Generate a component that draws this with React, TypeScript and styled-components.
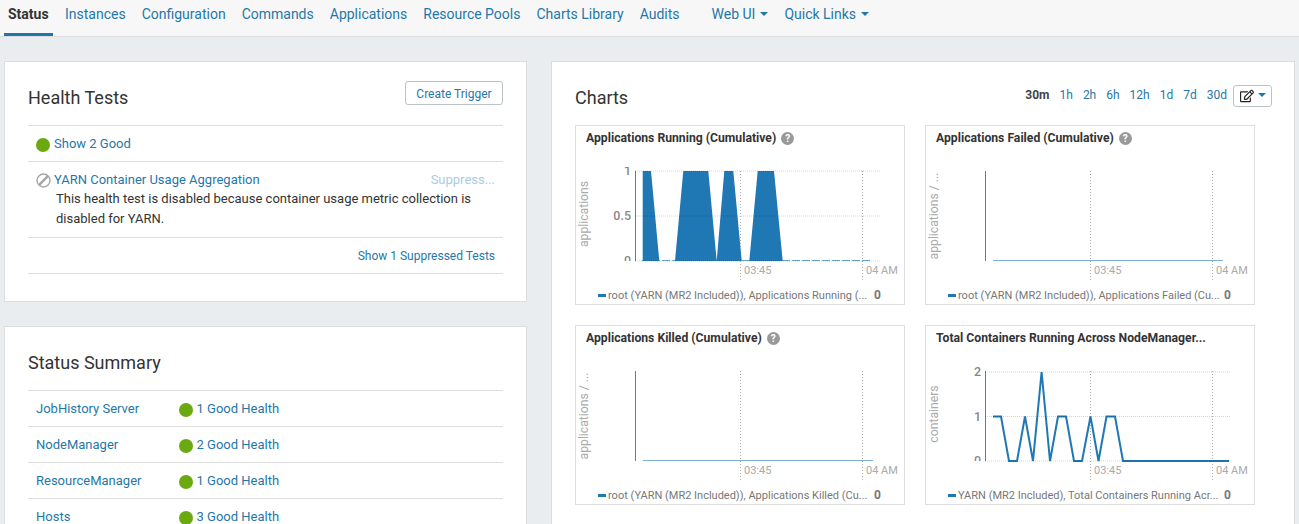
import React from "react";
import styled, { createGlobalStyle } from "styled-components";
import { FaRegEdit } from "react-icons/fa";

const GlobalStyle = createGlobalStyle`
  html, body {
    margin: 0;
    padding: 0;
    height: 524px;
    overflow: hidden;
    background: #e9edf0;
    font-family: Roboto, "Liberation Sans", sans-serif;
    font-size: 13px;
    color: #333;
  }
  * { box-sizing: border-box; }
`;

const LINK = "#1f77a8";

const Nav = styled.nav`
  height: 37px;
  background: #f7f7f7;
  border-bottom: 1px solid #dcdcdc;
  display: flex;
  padding-left: 4px;
`;
const Tab = styled.a<{ $active?: boolean; $gap?: number }>`
  height: 36px;
  min-width: ${(p) => (p.$active ? "49px" : "0")};
  padding: 5px 4px 0;
  margin-left: ${(p) => p.$gap ?? 0}px;
  margin-right: 8px;
  font-size: 14px;
  line-height: 18px;
  color: ${(p) => (p.$active ? "#333" : LINK)};
  font-weight: ${(p) => (p.$active ? 700 : 400)};
  border-bottom: 3px solid ${(p) => (p.$active ? LINK : "transparent")};
  display: flex;
  align-items: flex-start;
`;
const Caret = styled.span`
  display: inline-block;
  width: 0;
  height: 0;
  margin-left: 5px;
  margin-top: 7px;
  border-left: 4px solid transparent;
  border-right: 4px solid transparent;
  border-top: 4px solid ${LINK};
`;
const EditCaret = styled(Caret)`
  margin-top: 0;
  margin-bottom: 2px;
  margin-left: 4px;
`;

const Main = styled.main`
  display: grid;
  grid-template-columns: 523px 744px;
  gap: 24px;
  padding: 24px 4px 0;
  align-items: start;
`;
const Column = styled.div`
  display: flex;
  flex-direction: column;
  gap: 24px;
`;
const Panel = styled.section`
  background: #fff;
  border: 1px solid #dddddd;
  padding: 19px 23px 27px;
`;
const PanelHead = styled.div`
  height: 44px;
  display: flex;
  justify-content: space-between;
  align-items: flex-start;
`;
const PanelTitle = styled.h2`
  margin: 6px 0 0;
  font-size: 18px;
  line-height: 22px;
  font-weight: 400;
  color: #333;
`;
const OutlineButton = styled.button`
  width: 98px;
  height: 24px;
  padding: 2px 0 0;
  background: #fff;
  border: 1px solid #bcc3c7;
  border-radius: 3px;
  color: ${LINK};
  font: 400 12px/20px Roboto, sans-serif;
`;
const Row = styled.div`
  border-top: 1px solid #dddddd;
  min-height: 36px;
  padding: 9px 8px 8px;
  line-height: 18px;
  display: flex;
  align-items: flex-start;
`;
const RowEnd = styled(Row)`
  border-bottom: 1px solid #dddddd;
  justify-content: flex-end;
  height: 37px;
  font-size: 12px;
`;
const Link = styled.a`
  color: ${LINK};
`;
const Dot = styled.span`
  flex: none;
  width: 14px;
  height: 14px;
  border-radius: 50%;
  background: #6aa90f;
  margin: 3px 4px 0 0;
`;
const DisabledIcon = styled.svg`
  flex: none;
  width: 15px;
  height: 15px;
  margin: 2px 3px 0 0;
`;
const TestBody = styled.div`
  flex: 1;
`;
const TestHead = styled.div`
  display: flex;
  justify-content: space-between;
`;
const Suppress = styled.span`
  color: #a9cde0;
`;
const TestText = styled.p`
  margin: 0 20px 0 2px;
  font-size: 13px;
  line-height: 20px;
  color: #333;
`;
const SummaryName = styled(Link)`
  width: 142.5px;
  flex: none;
`;

const RangeBar = styled.div`
  display: flex;
  align-items: flex-start;
  margin-top: 4px;
  margin-right: -1px;
  font-size: 12px;
`;
const Range = styled.a<{ $active?: boolean }>`
  margin-right: 10px;
  line-height: 20px;
  color: ${(p) => (p.$active ? "#444" : LINK)};
  font-weight: ${(p) => (p.$active ? 700 : 400)};
`;
const EditButton = styled.button`
  width: 39px;
  height: 22px;
  margin-left: -4px;
  padding: 0 0 0 6px;
  background: #fff;
  border: 1px solid #bcc3c7;
  border-radius: 3px;
  display: flex;
  align-items: center;
  color: #222;
  svg { width: 14px; height: 14px; }
`;
const ChartGrid = styled.div`
  display: grid;
  grid-template-columns: 330px 330px;
  gap: 20px;
`;
const ChartCard = styled.div`
  height: 180px;
  border: 1px solid #dddddd;
  background: #fff;
  display: flex;
  flex-direction: column;
`;
const ChartTitle = styled.div`
  height: 25px;
  padding: 4px 0 0 10px;
  font-size: 12.2px;
  line-height: 17px;
  font-weight: 700;
  color: #333;
  display: flex;
  align-items: flex-start;
`;
const Help = styled.span`
  width: 13px;
  height: 13px;
  margin: 2px 0 0 5px;
  border-radius: 50%;
  background: #999;
  color: #fff;
  font-size: 10px;
  line-height: 13px;
  text-align: center;
`;
const Plot = styled.svg`
  display: block;
  width: 328px;
  height: 133px;
  font-family: Roboto, sans-serif;
`;
const Legend = styled.div`
  display: flex;
  align-items: center;
  height: 20px;
  padding: 2px 0 0 22px;
  font-size: 11px;
  color: #777;
`;
const Swatch = styled.span`
  width: 8px;
  height: 3px;
  background: #1f77b4;
  margin-right: 2px;
  flex: none;
`;
const LegendText = styled.span`
  width: 266px;
  flex: none;
  white-space: nowrap;
`;
const LegendValue = styled.b`
  color: #777;
  font-size: 12px;
`;

// plot geometry, in svg units (x0 = card left + 1, y0 = card top + 26)
const AXIS_X = 59;
const TOP = 20;
const BOTTOM = 110;

type ChartProps = {
  title: string;
  help?: boolean;
  yLabel: string;
  ticks?: { label: string; y: number }[];
  legend: string;
  children?: React.ReactNode;
};

const Chart: React.FC<ChartProps> = ({ title, help = true, yLabel, ticks = [], legend, children }) => {
  const clipId = "clip-" + title.replace(/[^a-z]/gi, "");
  const labelY = yLabel.length > 12 ? 65 : 63;
  return (
    <ChartCard>
      <ChartTitle>
        {title}
        {help && <Help>?</Help>}
      </ChartTitle>
      <Plot viewBox="0 0 328 133">
        <clipPath id={clipId}>
          <rect x="0" y={TOP - 4} width="328" height={BOTTOM - TOP + 4} />
        </clipPath>
        <line x1="164.5" x2="164.5" y1={TOP} y2="130" stroke="#aaa" strokeDasharray="1 2" />
        <line x1="286.5" x2="286.5" y1={TOP} y2="130" stroke="#aaa" strokeDasharray="1 2" />
        <line x1={AXIS_X + 0.5} x2={AXIS_X + 0.5} y1={TOP} y2={BOTTOM} stroke="#777" />
        {children}
        {ticks.map((t) => (
          <line key={t.label} x1={AXIS_X} x2="305" y1={t.y} y2={t.y} stroke="rgba(0,0,0,0.17)" strokeDasharray="1 1" />
        ))}
        <g clipPath={`url(#${clipId})`} fontSize="12.5" fontWeight="500" fill="#888" textAnchor="end">
          {ticks.map((t) => (
            <text key={t.label} x={AXIS_X - 4} y={t.y + 4}>
              {t.label}
            </text>
          ))}
        </g>
        <text x="168" y="123" fontSize="11" fill="#aaa">03:45</text>
        <text x="290" y="123" fontSize="11" fill="#aaa">04 AM</text>
        <text
          transform={`rotate(-90 9 ${labelY})`}
          x="9"
          y={labelY}
          fontSize="12.2"
          fill="#aaa"
          textAnchor="middle"
          dominantBaseline="middle"
        >
          {yLabel}
        </text>
      </Plot>
      <Legend>
        <Swatch />
        <LegendText>{legend}</LegendText>
        <LegendValue>0</LegendValue>
      </Legend>
    </ChartCard>
  );
};

const runningArea =
  "M66.7 20 L75 20 L83.3 110 L66.7 110 Z M99 110 L107.3 20 L132.3 20 L140.7 110 Z M140.7 110 L148.3 20 L157.3 20 L165.7 110 Z M173.3 110 L181.7 20 L198 20 L206.7 110 Z";

const containerPoints: [number, number][] = [
  [67, 1], [75, 1], [83, 0], [91, 0], [99, 1], [107, 0], [115.6, 2], [124, 0], [132, 1], [140, 1],
  [148, 0], [156, 0], [164.5, 1], [172.5, 0], [180.5, 1], [189, 1], [197, 0], [303, 0],
];
const containerLine = containerPoints.map(([x, v]) => `${x},${BOTTOM - v * 44.5}`).join(" ");

const summary = [
  ["JobHistory Server", "1 Good Health"],
  ["NodeManager", "2 Good Health"],
  ["ResourceManager", "1 Good Health"],
  ["Hosts", "3 Good Health"],
];

const tabs = ["Instances", "Configuration", "Commands", "Applications", "Resource Pools", "Charts Library", "Audits"];
const ranges = ["1h", "2h", "6h", "12h", "1d", "7d", "30d"];

const App: React.FC = () => (
  <>
    <GlobalStyle />
    <Nav>
      <Tab $active>Status</Tab>
      {tabs.map((t) => (
        <Tab key={t}>{t}</Tab>
      ))}
      <Tab $gap={16}>
        Web UI
        <Caret />
      </Tab>
      <Tab>
        Quick Links
        <Caret />
      </Tab>
    </Nav>
    <Main>
      <Column>
        <Panel>
          <PanelHead>
            <PanelTitle>Health Tests</PanelTitle>
            <OutlineButton>Create Trigger</OutlineButton>
          </PanelHead>
          <Row>
            <Dot />
            <Link>Show 2 Good</Link>
          </Row>
          <Row>
            <DisabledIcon viewBox="0 0 15 15">
              <circle cx="7.5" cy="7.5" r="6.5" fill="none" stroke="#a6a6a6" strokeWidth="1.4" />
              <line x1="3.2" y1="11.8" x2="11.8" y2="3.2" stroke="#a6a6a6" strokeWidth="2.4" />
            </DisabledIcon>
            <TestBody>
              <TestHead>
                <Link>YARN Container Usage Aggregation</Link>
                <Suppress>Suppress...</Suppress>
              </TestHead>
              <TestText>
                This health test is disabled because container usage metric collection is disabled for YARN.
              </TestText>
            </TestBody>
          </Row>
          <RowEnd>
            <Link>Show 1 Suppressed Tests</Link>
          </RowEnd>
        </Panel>
        <Panel>
          <PanelHead>
            <PanelTitle>Status Summary</PanelTitle>
          </PanelHead>
          {summary.map(([name, health]) => (
            <Row key={name}>
              <SummaryName>{name}</SummaryName>
              <Dot />
              <Link>{health}</Link>
            </Row>
          ))}
        </Panel>
      </Column>
      <Panel>
        <PanelHead>
          <PanelTitle>Charts</PanelTitle>
          <RangeBar>
            <Range $active>30m</Range>
            {ranges.map((r) => (
              <Range key={r}>{r}</Range>
            ))}
            <EditButton>
              <FaRegEdit />
              <EditCaret />
            </EditButton>
          </RangeBar>
        </PanelHead>
        <ChartGrid>
          <Chart
            title="Applications Running (Cumulative)"
            yLabel="applications"
            ticks={[
              { label: "1", y: 20 },
              { label: "0.5", y: 65 },
              { label: "0", y: 110 },
            ]}
            legend="root (YARN (MR2 Included)), Applications Running (..."
          >
            <line x1="66" x2="296" y1="109.5" y2="109.5" stroke="#6fa8cf" strokeDasharray="8 2" />
            <path d={runningArea} fill="#1f77b4" />
          </Chart>
          <Chart
            title="Applications Failed (Cumulative)"
            yLabel="applications / ..."
            legend="root (YARN (MR2 Included)), Applications Failed (Cu..."
          >
            <line x1="67" x2="297" y1="109.5" y2="109.5" stroke="#7fb3d5" />
          </Chart>
          <Chart
            title="Applications Killed (Cumulative)"
            yLabel="applications / ..."
            legend="root (YARN (MR2 Included)), Applications Killed (Cu..."
          >
            <line x1="67" x2="297" y1="109.5" y2="109.5" stroke="#7fb3d5" />
          </Chart>
          <Chart
            title="Total Containers Running Across NodeManager..."
            help={false}
            yLabel="containers"
            ticks={[
              { label: "2", y: 21 },
              { label: "1", y: 65.5 },
              { label: "0", y: 110 },
            ]}
            legend="YARN (MR2 Included), Total Containers Running Acr..."
          >
            <polyline points={containerLine} fill="none" stroke="#1f77b4" strokeWidth="2" />
          </Chart>
        </ChartGrid>
      </Panel>
    </Main>
  </>
);

export default App;
